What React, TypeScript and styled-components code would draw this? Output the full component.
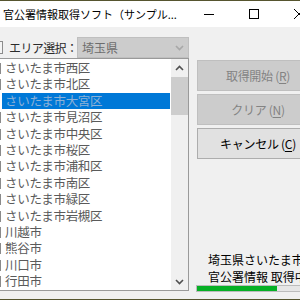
import React from "react";
import styled, { createGlobalStyle } from "styled-components";

const GlobalStyle = createGlobalStyle`
    html, body {
        margin: 0;
        padding: 0;
        background: #f0f0f0;
    }
    body {
        font-family: "Noto Sans CJK JP", "Noto Sans", sans-serif;
    }
`;

const areas = [
    "さいたま市西区",
    "さいたま市北区",
    "さいたま市大宮区",
    "さいたま市見沼区",
    "さいたま市中央区",
    "さいたま市桜区",
    "さいたま市浦和区",
    "さいたま市南区",
    "さいたま市緑区",
    "さいたま市岩槻区",
    "川越市",
    "熊谷市",
    "川口市",
    "行田市",
];

const Viewport = styled.div`
    width: 300px;
    height: 300px;
    overflow: hidden;
`;

const Window = styled.div`
    width: 321px;
    height: 300px;
    display: flex;
    flex-direction: column;
    border-top: 1px solid #56552f;
    box-sizing: border-box;
    background: #f0f0f0;
`;

const TitleBar = styled.div`
    height: 26px;
    flex: none;
    display: flex;
    align-items: center;
    background: #ffffff;
`;

const Title = styled.div`
    flex: 1;
    padding-left: 3px;
    font-size: 11px;
    line-height: 26px;
    color: #000;
    white-space: nowrap;
    overflow: hidden;
`;

const CaptionButton = styled.div`
    width: 45px;
    height: 26px;
    display: flex;
    align-items: center;
    justify-content: center;
`;

const Client = styled.div`
    flex: 1;
    display: flex;
    gap: 8px;
    padding-bottom: 6px;
    border-bottom: 1px solid #56552f;
    min-height: 0;
`;

const LeftColumn = styled.div`
    width: 189px;
    flex: none;
    display: flex;
    flex-direction: column;
    padding-top: 10px;
`;

const AreaRow = styled.div`
    height: 21px;
    display: flex;
    align-items: center;
`;

const CutBox = styled.div`
    width: 11px;
    height: 11px;
    margin-left: -10px;
    border: 1px solid #8c8c8c;
    background: #f4f4f4;
    flex: none;
`;

const Label = styled.div`
    width: 74px;
    padding-left: 6px;
    box-sizing: border-box;
    font-size: 12px;
    letter-spacing: -0.6px;
    color: #2b2b2b;
    white-space: nowrap;
`;

const Combo = styled.div`
    flex: 1;
    height: 21px;
    box-sizing: border-box;
    display: flex;
    align-items: center;
    justify-content: space-between;
    padding: 0 4px;
    background: #cccccc;
    border: 1px solid #bfbfbf;
    font-size: 12px;
    color: #6d6d6d;
`;

const ListBox = styled.div`
    height: 233px;
    box-sizing: border-box;
    display: flex;
    border: 1px solid #9a9a9a;
    border-left: none;
    background: #ffffff;
    overflow: hidden;
`;

const Rows = styled.div`
    flex: 1;
    display: flex;
    flex-direction: column;
    padding: 1px 1px 0 2px;
`;

const Row = styled.div<{ $selected?: boolean }>`
    position: relative;
    flex: none;
    height: 16.4px;
    line-height: 16.4px;
    padding-left: 3px;
    font-size: 12.5px;
    letter-spacing: -0.3px;
    white-space: nowrap;
    color: ${(p) => (p.$selected ? "#8db1d6" : "#5a5a5a")};
    background: ${(p) => (p.$selected ? "#0078d7" : "transparent")};

    &::before {
        content: "";
        position: absolute;
        left: -2px;
        top: 3px;
        width: 1px;
        height: 11px;
        background: ${(p) => (p.$selected ? "transparent" : "#8a8a8a")};
    }
`;

const ScrollBar = styled.div`
    width: 17px;
    flex: none;
    display: flex;
    flex-direction: column;
    background: #f0f0f0;
`;

const ScrollArrow = styled.div`
    height: 17px;
    display: flex;
    align-items: center;
    justify-content: center;
`;

const Thumb = styled.div`
    height: 38px;
    margin-top: 1px;
    background: #cdcdcd;
`;

const Spacer = styled.div`
    flex: 1;
`;

const RightColumn = styled.div`
    width: 122px;
    flex: none;
    display: flex;
    flex-direction: column;
    padding-top: 33px;
`;

const Buttons = styled.div`
    display: flex;
    flex-direction: column;
    gap: 3px;
`;

const Button = styled.div<{ $disabled?: boolean }>`
    height: 31px;
    box-sizing: border-box;
    display: flex;
    align-items: center;
    justify-content: center;
    font-size: 12px;
    letter-spacing: -0.3px;
    background: ${(p) => (p.$disabled ? "#cccccc" : "#e1e1e1")};
    border: 1px solid ${(p) => (p.$disabled ? "#bfbfbf" : "#adadad")};
    color: ${(p) => (p.$disabled ? "#838383" : "#000000")};

    u {
        text-decoration: underline;
        text-underline-offset: 2px;
    }
`;

const Status = styled.div`
    padding-left: 11px;
    font-size: 12px;
    line-height: 17px;
    color: #000;
    white-space: nowrap;
    overflow: hidden;
`;

const Progress = styled.div`
    height: 7px;
    margin: 0 0 1px -1px;
    box-sizing: border-box;
    border: 1px solid #bcbcbc;
    background: #e6e6e6;
`;

const ProgressFill = styled.div`
    height: 100%;
    background: #06b025;
`;

const Chevron = ({ up, color }: { up?: boolean; color: string }) => (
    <svg width="9" height="6" viewBox="0 0 9 6">
        <path
            d={up ? "M1 5 L4.5 1.5 L8 5" : "M1 1 L4.5 4.5 L8 1"}
            fill="none"
            stroke={color}
            strokeWidth="1.6"
        />
    </svg>
);

export default function App() {
    const progress = 66;
    return (
        <Viewport>
            <GlobalStyle />
            <Window>
                <TitleBar>
                    <Title>官公署情報取得ソフト（サンプル...</Title>
                    <CaptionButton>
                        <svg width="10" height="10" viewBox="0 0 10 10">
                            <path d="M0 5.5 H10" stroke="#000" strokeWidth="1" />
                        </svg>
                    </CaptionButton>
                    <CaptionButton>
                        <svg width="10" height="10" viewBox="0 0 10 10">
                            <rect x="0.5" y="0.5" width="9" height="9" fill="none" stroke="#000" strokeWidth="1" />
                        </svg>
                    </CaptionButton>
                    <CaptionButton>
                        <svg width="10" height="10" viewBox="0 0 10 10">
                            <path d="M0 0 L10 10 M10 0 L0 10" stroke="#000" strokeWidth="1" />
                        </svg>
                    </CaptionButton>
                </TitleBar>
                <Client>
                    <LeftColumn>
                        <AreaRow>
                            <CutBox />
                            <Label>エリア選択：</Label>
                            <Combo>
                                <span>埼玉県</span>
                                <Chevron color="#a8a8a8" />
                            </Combo>
                        </AreaRow>
                        <ListBox>
                            <Rows>
                                {areas.map((a, i) => (
                                    <Row key={a} $selected={i === 2}>
                                        {a}
                                    </Row>
                                ))}
                            </Rows>
                            <ScrollBar>
                                <ScrollArrow>
                                    <Chevron up color="#505050" />
                                </ScrollArrow>
                                <Thumb />
                                <Spacer />
                                <ScrollArrow>
                                    <Chevron color="#505050" />
                                </ScrollArrow>
                            </ScrollBar>
                        </ListBox>
                    </LeftColumn>
                    <RightColumn>
                        <Buttons>
                            <Button $disabled>
                                取得開始 (<u>R</u>)
                            </Button>
                            <Button $disabled>
                                クリア (<u>N</u>)
                            </Button>
                            <Button>
                                キャンセル (<u>C</u>)
                            </Button>
                        </Buttons>
                        <Spacer />
                        <Status>埼玉県さいたま市大宮区</Status>
                        <Status>官公署情報 取得中...</Status>
                        <Progress>
                            <ProgressFill style={{ width: `${progress}%` }} />
                        </Progress>
                    </RightColumn>
                </Client>
            </Window>
        </Viewport>
    );
}
